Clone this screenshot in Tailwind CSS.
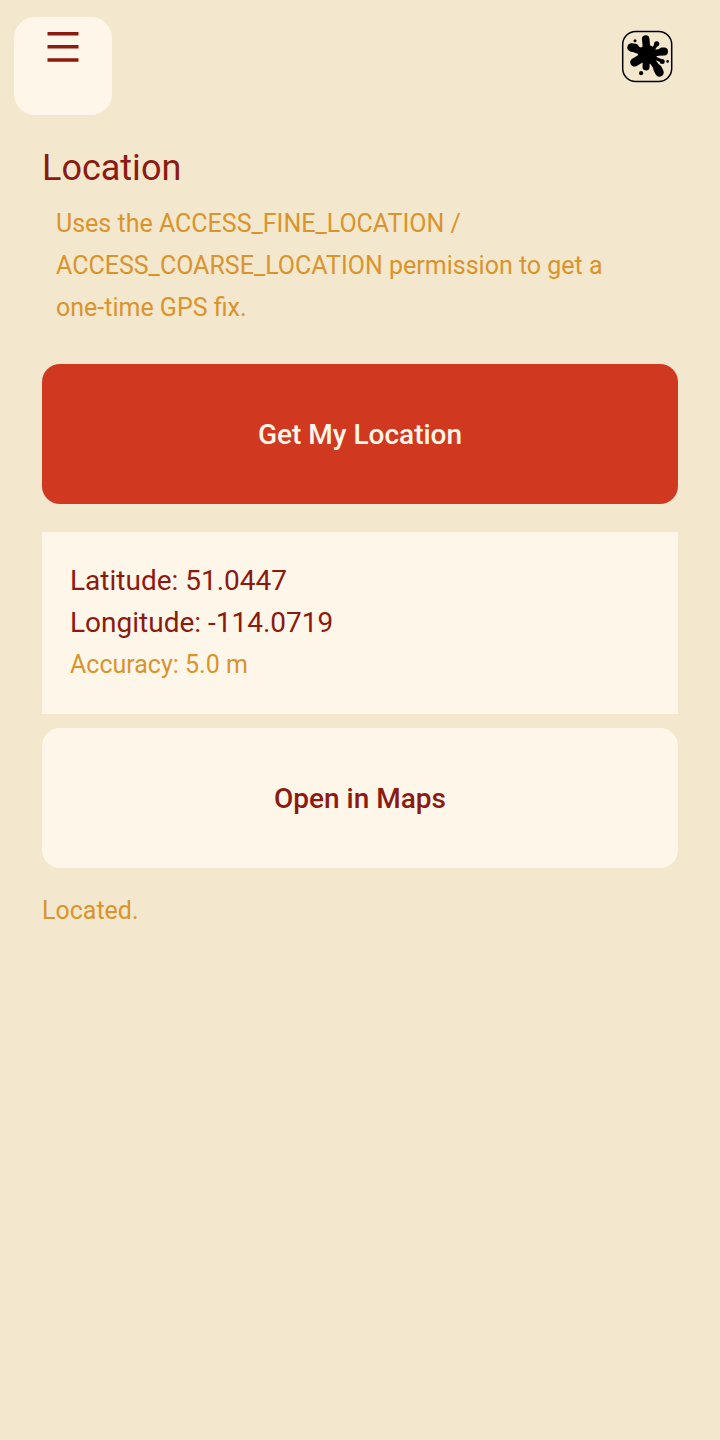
<!DOCTYPE html>
<html lang="en">
<head>
<meta charset="utf-8">
<meta name="viewport" content="width=device-width, initial-scale=1">
<title>Location</title>
<script src="https://cdn.jsdelivr.net/npm/@tailwindcss/browser@4"></script>
</head>
<body class="min-h-screen bg-[#f3e7ce] font-[Roboto,sans-serif] text-[#8b1a10]">
<header class="flex items-start justify-between pt-[17px] pr-[46px] pl-3.5">
  <button type="button" aria-label="Open menu" class="flex size-[98px] items-start justify-center rounded-[21px] bg-[#fef6e9] pt-3.5">
    <svg class="h-8 w-8" viewBox="0 0 32 32" fill="currentColor" aria-hidden="true">
      <path d="M.5 1h31v3.5H.5zM.5 14h31v3.5H.5zM.5 27.200h31v3.500H.5z"/>
    </svg>
  </button>
  <svg class="mt-3 size-[54px]" viewBox="0 0 54 54" role="img" aria-label="Logo">
    <rect x="2.700" y="2.500" width="49" height="50" rx="13" fill="none" stroke="#000" stroke-width="1.500"/>
    <circle cx="27.500" cy="25.500" r="9.500"/>
    <g stroke="#000" stroke-linecap="round" fill="none">
      <path d="M25.700 10 27 24" stroke-width="7.500"/>
      <path d="M11.500 18.500 15 19" stroke-width="8.500"/>
      <path d="M14 19.500 25 24" stroke-width="7"/>
      <path d="M14.500 33.300 25 27" stroke-width="8.500"/>
      <path d="M28 26 38 40" stroke-width="6.500"/>
      <path d="M37.500 39.500 39.500 43.500" stroke-width="8.500"/>
      <path d="M28 25 42 23" stroke-width="6.500"/>
      <path d="M42.500 22.500 44 22.400" stroke-width="8"/>
      <path d="M32 22 36 16" stroke-width="3.500"/>
      <path d="M26.500 28 26 38" stroke-width="7"/>
      <path d="M32 28 42 32" stroke-width="3.500"/>
    </g>
    <circle cx="36.700" cy="14.800" r="2.600"/>
    <circle cx="42.200" cy="32.500" r="2.500"/>
    <circle cx="15" cy="11.800" r="1.500"/>
    <circle cx="47.600" cy="32.400" r="1.300"/>
    <circle cx="21.100" cy="44.200" r="2.100"/>
  </svg>
</header>
<main class="flex flex-col px-[42px] pt-7">
  <h1 class="text-[36px] leading-[50px]">Location</h1>
  <p class="mt-2.5 px-3.5 text-[25px] leading-[42px] text-[#d9942c]">Uses the ACCESS_FINE_LOCATION / ACCESS_COARSE_LOCATION permission to get a <span class="whitespace-nowrap">one-time</span> GPS fix.</p>
  <button type="button" class="mt-[35px] h-[140px] rounded-[18px] bg-[#d0391f] pt-0.5 text-[28px] font-medium text-[#fef6e9]">Get My Location</button>
  <section aria-label="Position" class="mt-7 bg-[#fef6e9] p-7 text-[28px] leading-[42px]">
    <p>Latitude: 51.0447</p>
    <p>Longitude: -114.0719</p>
    <p class="text-[25px] text-[#d9942c]">Accuracy: 5.0 m</p>
  </section>
  <button type="button" class="mt-3.5 h-[140px] rounded-[18px] bg-[#fef6e9] pt-0.5 text-[28px] font-medium">Open in Maps</button>
  <p role="status" class="mt-[22px] text-[25px] leading-[42px] text-[#d9942c]">Located.</p>
</main>
</body>
</html>
